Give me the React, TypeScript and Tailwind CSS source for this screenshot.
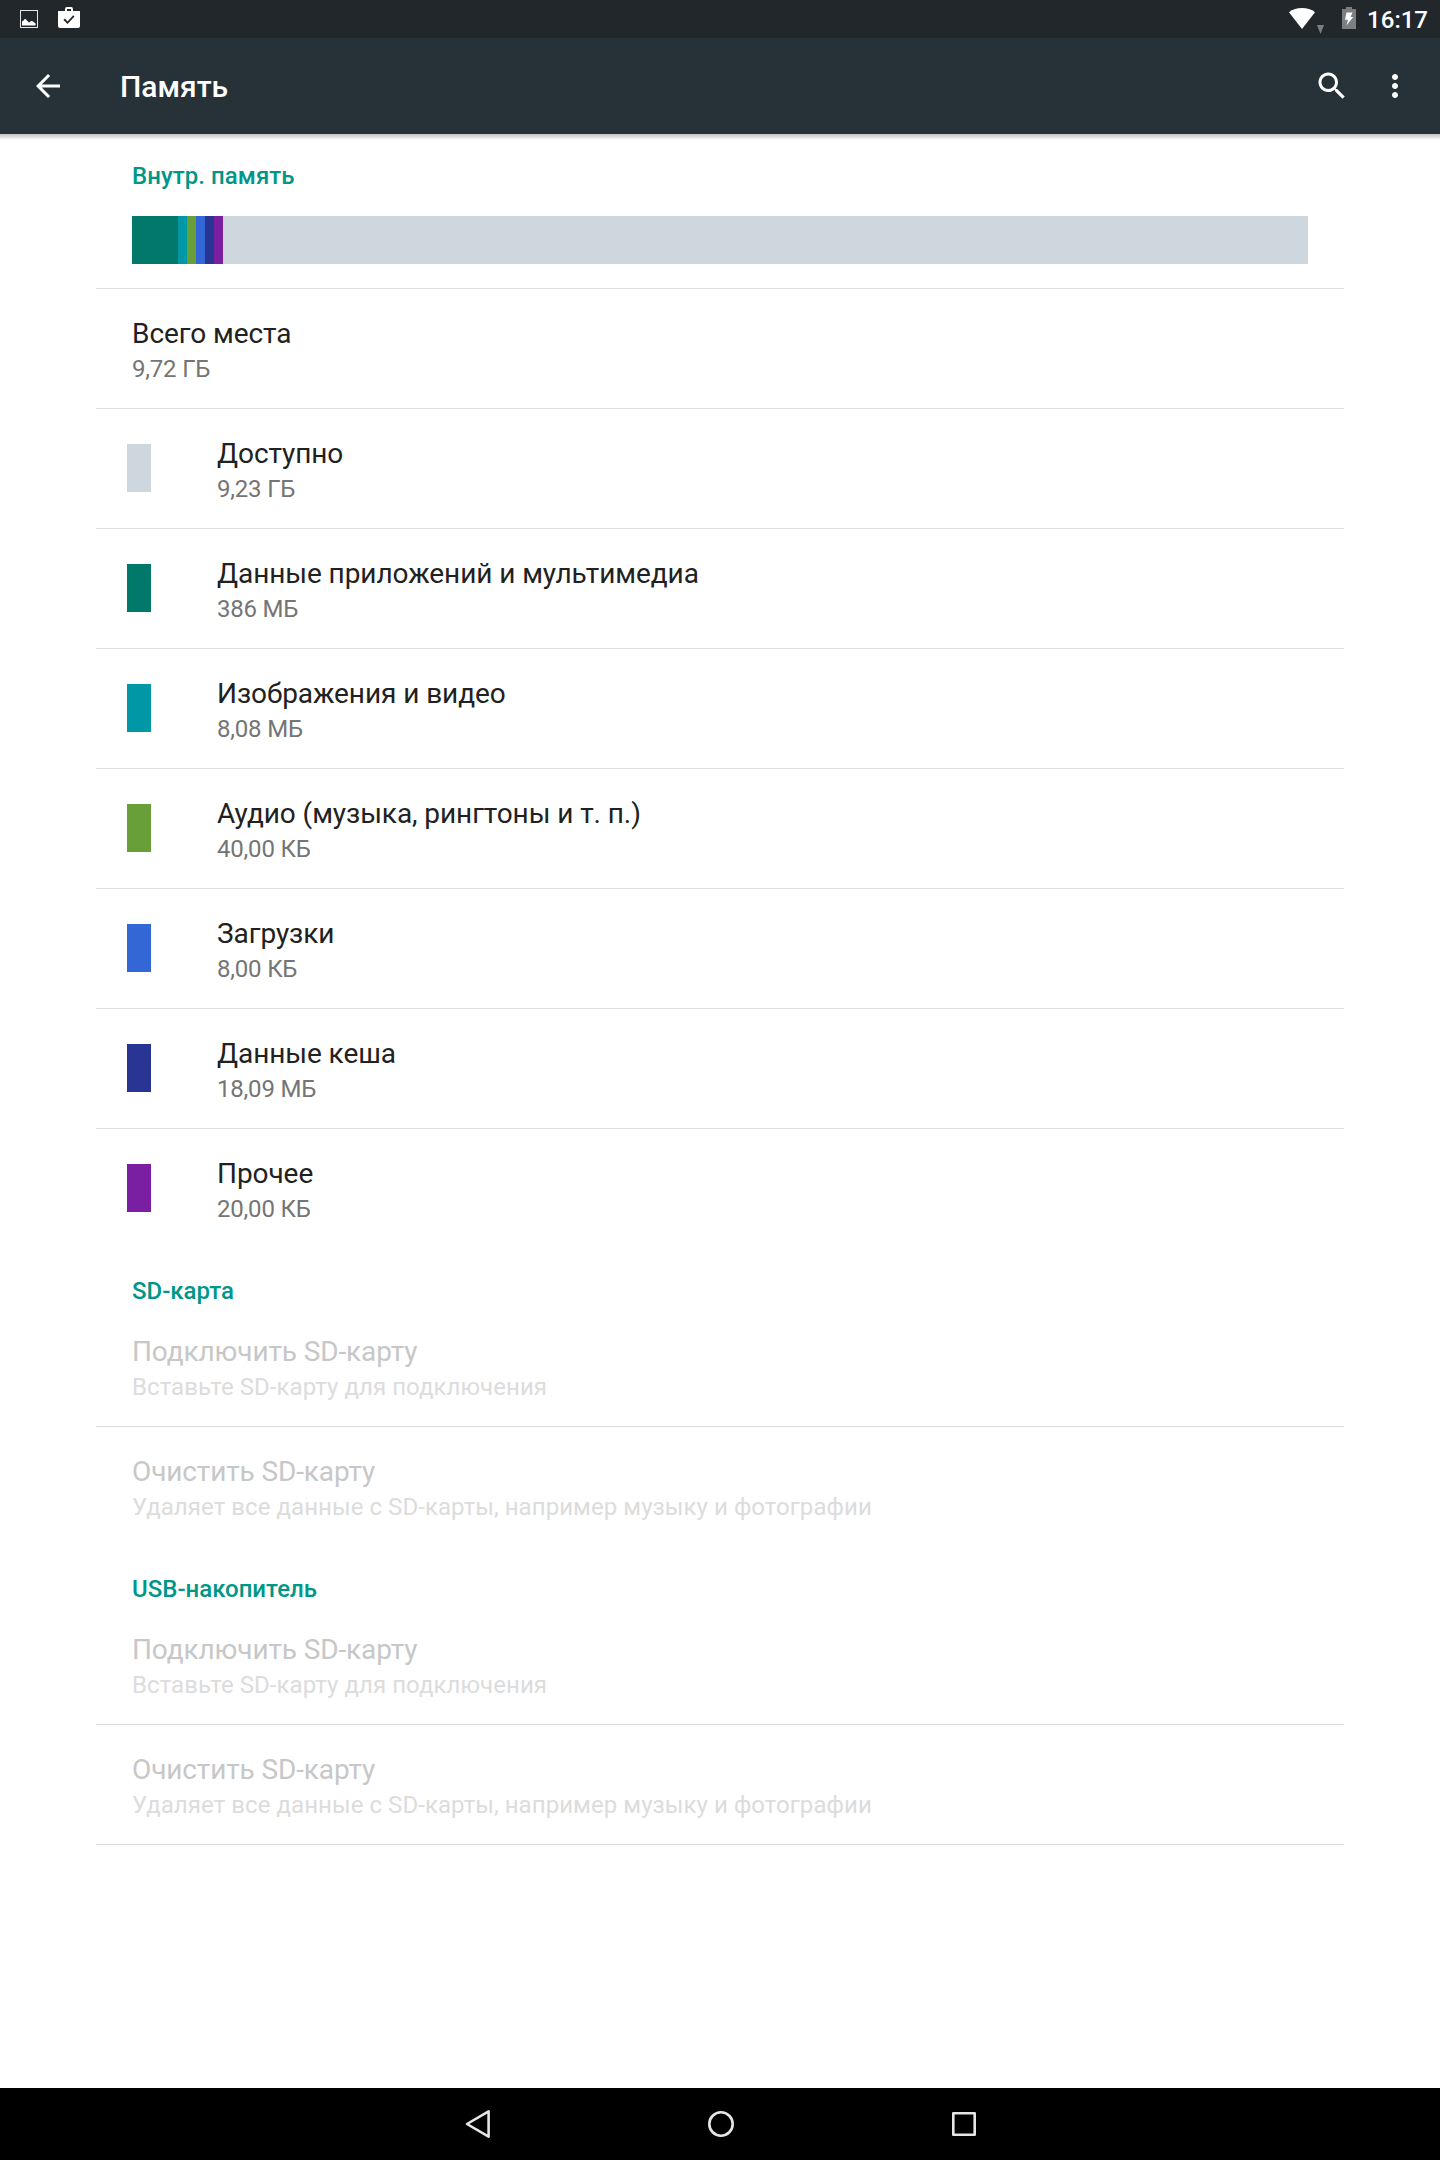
import React from 'react';

type Item = {
  title: string;
  summary: string;
  color?: string;
};

const storage: Item[] = [
  { title: 'Всего места', summary: '9,72 ГБ' },
  { title: 'Доступно', summary: '9,23 ГБ', color: 'bg-[#ced7de]' },
  { title: 'Данные приложений и мультимедиа', summary: '386 МБ', color: 'bg-[#00796b]' },
  { title: 'Изображения и видео', summary: '8,08 МБ', color: 'bg-[#0097a7]' },
  { title: 'Аудио (музыка, рингтоны и т. п.)', summary: '40,00 КБ', color: 'bg-[#689f38]' },
  { title: 'Загрузки', summary: '8,00 КБ', color: 'bg-[#3367d6]' },
  { title: 'Данные кеша', summary: '18,09 МБ', color: 'bg-[#283593]' },
  { title: 'Прочее', summary: '20,00 КБ', color: 'bg-[#7b1fa2]' },
];

const cardActions: Item[] = [
  { title: 'Подключить SD-карту', summary: 'Вставьте SD-карту для подключения' },
  { title: 'Очистить SD-карту', summary: 'Удаляет все данные с SD-карты, например музыку и фотографии' },
];

const segments = [
  'w-[46px] bg-[#00796b]',
  'w-[9px] bg-[#0097a7]',
  'w-[9px] bg-[#689f38]',
  'w-[9px] bg-[#3367d6]',
  'w-[9px] bg-[#283593]',
  'w-[9px] bg-[#7b1fa2]',
  'flex-1 bg-[#ced7de]',
];

const StatusBar: React.FC = () => (
  <div className="flex h-[38px] items-start justify-between bg-[#21272b]">
    <div className="flex">
      {/* Screenshot notification */}
      <svg className="ml-5 mt-2.5" width="18" height="18" viewBox="0 0 18 18">
        <rect x="0.5" y="0.5" width="17" height="17" fill="none" stroke="#e4e6e6" />
        <path d="M2 15.6v-4l1.6-1.2Q5 7.8 6.6 10.2L9 12.4l2.5-1.6 1.5.8 2.6 1.8v2.2z" fill="#fff" />
      </svg>
      {/* Installed app notification */}
      <svg className="ml-5 mt-[7px]" width="22" height="21" viewBox="0 0 22 21">
        <path
          fill="#fff"
          fillRule="evenodd"
          d="M7 4V2q0-2 2-2h4q2 0 2 2v2h7v15q0 2-2 2H2q-2 0-2-2V4zM9 4h4V2H9zM6.8 11.6l-1.3 1.3L9.5 17l7-7.6-1.3-1.2-5.7 6.2z"
        />
      </svg>
    </div>
    <div className="flex">
      <svg className="mt-2" width="26" height="21" viewBox="0 0 26 21">
        <path d="M0 4.2Q5.5 0 13 0t13 4.2L13 21z" fill="#fff" />
      </svg>
      <svg className="ml-0.5 mt-[25px]" width="7" height="9" viewBox="0 0 7 9">
        <path d="M0 0h7L3.5 9z" fill="#7b7f81" />
      </svg>
      <svg className="ml-[18px] mt-[7px]" width="14" height="22" viewBox="0 0 14 22">
        <path d="M4 0h6v2h4v20H0V2h4z" fill="#7b7f81" />
        <path d="M4.5 5.5h6L8.6 10h2.6L4.5 18.5 6 12.7H3z" fill="#fff" />
      </svg>
      <span className="ml-[11px] mr-3 mt-1.5 text-2xl leading-7 font-medium text-white">16:17</span>
    </div>
  </div>
);

const AppBar: React.FC = () => (
  <header className="relative flex h-24 items-center bg-[#263238] text-white">
    <svg className="ml-[30px]" width="36" height="36" viewBox="0 0 24 24" fill="currentColor">
      <path d="M20 11H7.83l5.59-5.59L12 4l-8 8 8 8 1.41-1.41L7.83 13H20v-2z" />
    </svg>
    <h1 className="ml-[54px] flex-1 pt-0.5 text-[30px] leading-9 font-medium">Память</h1>
    <svg className="mr-[27px]" width="36" height="36" viewBox="0 0 24 24" fill="currentColor">
      <path d="M15.5 14h-.79l-.28-.27C15.41 12.59 16 11.11 16 9.5 16 5.91 13.09 3 9.5 3S3 5.91 3 9.5 5.91 16 9.5 16c1.61 0 3.09-.59 4.23-1.57l.27.28v.79l5 4.99L20.49 19l-4.99-5zm-6 0C7.01 14 5 11.99 5 9.5S7.01 5 9.5 5 14 7.01 14 9.5 11.99 14 9.5 14z" />
    </svg>
    <svg className="mr-[27px]" width="36" height="36" viewBox="0 0 24 24" fill="currentColor">
      <path d="M12 8c1.1 0 2-.9 2-2s-.9-2-2-2-2 .9-2 2 .9 2 2 2zm0 2c-1.1 0-2 .9-2 2s.9 2 2 2 2-.9 2-2-.9-2-2-2zm0 6c-1.1 0-2 .9-2 2s.9 2 2 2 2-.9 2-2-.9-2-2-2z" />
    </svg>
    <div className="absolute inset-x-0 top-full h-1.5 bg-linear-to-b from-[#c2c2c2] to-white" />
  </header>
);

const Row: React.FC<{ item: Item; disabled?: boolean }> = ({ item, disabled }) => (
  <div className="flex h-[119px] items-start">
    {item.color && <div className={`ml-[31px] mt-[35px] h-12 w-6 ${item.color}`} />}
    <div className={item.color ? 'ml-[66px] pt-7' : 'ml-9 pt-7'}>
      <div
        className={`text-[28px] leading-[34px] ${disabled ? 'tracking-[-0.12px] text-[#c7c7c7]' : 'tracking-[-0.07px] text-[#212121]'}`}
      >
        {item.title}
      </div>
      <div
        className={`text-2xl leading-9 ${disabled ? 'tracking-[0.06px] text-[#dcdcdc]' : 'tracking-[-0.2px] text-[#757575]'}`}
      >
        {item.summary}
      </div>
    </div>
  </div>
);

const NavBar: React.FC = () => (
  <nav className="flex h-[72px] items-center bg-black pl-[465px]">
    <svg width="26" height="30" viewBox="0 0 26 30" fill="none" stroke="#e6e6e6" strokeWidth="2.6" strokeLinejoin="round">
      <path d="M23.6 2.4v25.2L2 15z" />
    </svg>
    <svg className="ml-[216px]" width="28" height="28" viewBox="0 0 28 28" fill="none" stroke="#e6e6e6" strokeWidth="2.6">
      <circle cx="14" cy="14" r="11.7" />
    </svg>
    <svg className="ml-[216px]" width="26" height="26" viewBox="0 0 26 26" fill="none" stroke="#e6e6e6" strokeWidth="2.6" strokeLinejoin="round">
      <path d="M2.3 2.3h21.4v21.4H2.3z" />
    </svg>
  </nav>
);

export default function App() {
  return (
    <div className="flex h-[2160px] w-[1440px] flex-col bg-white font-['Roboto',sans-serif]">
      <StatusBar />
      <AppBar />
      <main className="mx-24 flex-1">
        <h2 className="px-9 pt-7 text-2xl leading-7 font-medium tracking-[0.06px] text-[#009688]">Внутр. память</h2>
        <div className="mx-9 mt-[26px] mb-6 flex h-12">
          {segments.map((segment) => (
            <div key={segment} className={segment} />
          ))}
        </div>
        {storage.map((item) => (
          <div key={item.title} className="border-t border-[#dedede]">
            <Row item={item} />
          </div>
        ))}
        {['SD-карта', 'USB-накопитель'].map((label) => (
          <section key={label}>
            <h2 className="h-[59px] px-9 pt-[29px] text-2xl leading-7 font-medium text-[#009688]">{label}</h2>
            <Row item={cardActions[0]} disabled />
            <div className="border-t border-[#dedede]">
              <Row item={cardActions[1]} disabled />
            </div>
          </section>
        ))}
        <div className="border-t border-[#dedede]" />
      </main>
      <NavBar />
    </div>
  );
}
